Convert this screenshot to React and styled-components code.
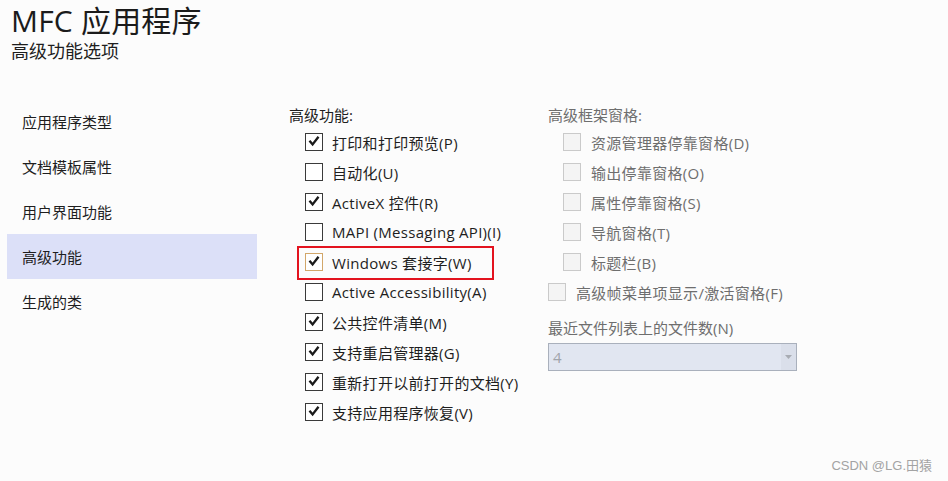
import React from "react";
import styled, { createGlobalStyle } from "styled-components";

const Global = createGlobalStyle`
  html, body { margin: 0; padding: 0; background: #fcfcfc; }
  body {
    font-family: "Open Sans", "Noto Sans CJK SC", sans-serif;
    color: #1e1e1e;
    width: 948px; height: 481px; overflow: hidden;
  }
`;

const Page = styled.div`
  position: relative;
  width: 948px;
  height: 481px;
  display: flex;
  flex-direction: column;
`;

const Header = styled.header`
  padding: 2px 0 0 11px;
  height: 99px;
  box-sizing: border-box;
`;

const Title = styled.h1`
  margin: 0;
  font-size: 30px;
  font-weight: 400;
  line-height: 38px;
  letter-spacing: 0.2px;
  color: #1b1b1b;
`;

const Subtitle = styled.div`
  font-size: 18px;
  line-height: 24px;
  margin-top: -1px;
  color: #1e1e1e;
`;

const Main = styled.div`
  display: flex;
  padding-left: 7px;
`;

const Sidebar = styled.nav`
  width: 250px;
  margin-right: 32px;
  display: flex;
  flex-direction: column;
`;

const NavItem = styled.div`
  height: 45px;
  display: flex;
  align-items: center;
  padding-left: 15px;
  font-size: 15px;
  background: ${(p) => (p.$active ? "#dce0f8" : "transparent")};
`;

const Column = styled.section`
  width: ${(p) => p.$w}px;
  padding-top: 5px;
  display: flex;
  flex-direction: column;
`;

const Label = styled.div`
  font-size: 15px;
  line-height: 23px;
  height: 23px;
  color: ${(p) => (p.$muted ? "#6e6e6e" : "#1e1e1e")};
`;

const Row = styled.label`
  position: relative;
  height: 30px;
  display: flex;
  align-items: center;
  padding-left: ${(p) => p.$indent}px;
  gap: ${(p) => p.$gap || 9}px;
  font-size: 15px;
  letter-spacing: 0.3px;
  white-space: nowrap;
  color: ${(p) => (p.$disabled ? "#6e6e6e" : "#1e1e1e")};
`;

const Box = styled.span`
  width: 18px;
  height: 18px;
  box-sizing: border-box;
  flex: none;
  border: 1px solid ${(p) => (p.$disabled ? "#cacaca" : p.$focus ? "#d2a76a" : "#3a3a3a")};
  background: ${(p) => (p.$disabled ? "#f4f4f4" : "#ffffff")};
  display: flex;
  align-items: center;
  justify-content: center;
`;

const Highlight = styled.span`
  position: absolute;
  left: 8px;
  top: -1px;
  width: 197px;
  height: 34px;
  box-sizing: border-box;
  border: 2px solid #e3131f;
  pointer-events: none;
`;

const FieldLabel = styled(Label)`
  margin-top: 10px;
  margin-bottom: 3px;
`;

const Select = styled.div`
  width: 249px;
  height: 28px;
  box-sizing: border-box;
  border: 1px solid #a9b0bc;
  background: #e1e6f1;
  display: flex;
  align-items: stretch;
`;

const SelectValue = styled.div`
  flex: 1;
  display: flex;
  align-items: center;
  padding-left: 4px;
  font-size: 15px;
  color: #a0a4ab;
`;

const SelectArrow = styled.div`
  width: 15px;
  background: #dadfea;
  display: flex;
  align-items: center;
  justify-content: center;
`;

const Watermark = styled.div`
  position: absolute;
  right: 16px;
  bottom: 7px;
  font-family: "Liberation Sans", "Noto Sans CJK SC", sans-serif;
  font-size: 13px;
  color: #a3a3a3;
`;

const Check = () => (
  <svg width="16" height="16" viewBox="0 0 16 16">
    <polyline
      points="4.2,7.6 6.6,10.4 11.8,3.6"
      fill="none"
      stroke="#1a1a1a"
      strokeWidth="2.3"
      strokeLinecap="square"
    />
  </svg>
);

const Checkbox = ({ checked, disabled, focus }) => (
  <Box $disabled={disabled} $focus={focus}>{checked && <Check />}</Box>
);

const navItems = ["应用程序类型", "文档模板属性", "用户界面功能", "高级功能", "生成的类"];

const features = [
  { t: "打印和打印预览(P)", c: true },
  { t: "自动化(U)", c: false },
  { t: "ActiveX 控件(R)", c: true },
  { t: "MAPI (Messaging API)(I)", c: false },
  { t: "Windows 套接字(W)", c: true, hl: true },
  { t: "Active Accessibility(A)", c: false },
  { t: "公共控件清单(M)", c: true },
  { t: "支持重启管理器(G)", c: true },
  { t: "重新打开以前打开的文档(Y)", c: true },
  { t: "支持应用程序恢复(V)", c: true },
];

const panes = ["资源管理器停靠窗格(D)", "输出停靠窗格(O)", "属性停靠窗格(S)", "导航窗格(T)", "标题栏(B)"];

export default function App() {
  return (
    <Page>
      <Global />
      <Header>
        <Title>MFC 应用程序</Title>
        <Subtitle>高级功能选项</Subtitle>
      </Header>
      <Main>
        <Sidebar>
          {navItems.map((n) => (
            <NavItem key={n} $active={n === "高级功能"}>{n}</NavItem>
          ))}
        </Sidebar>
        <Column $w={259}>
          <Label>高级功能:</Label>
          {features.map((f) => (
            <Row key={f.t} $indent={16}>
              <Checkbox checked={f.c} focus={f.hl} />
              <span>{f.t}</span>
              {f.hl && <Highlight />}
            </Row>
          ))}
        </Column>
        <Column $w={260}>
          <Label $muted>高级框架窗格:</Label>
          {panes.map((p) => (
            <Row key={p} $indent={15} $gap={10} $disabled>
              <Checkbox disabled />
              <span>{p}</span>
            </Row>
          ))}
          <Row $indent={0} $gap={10} $disabled>
            <Checkbox disabled />
            <span>高级帧菜单项显示/激活窗格(F)</span>
          </Row>
          <FieldLabel $muted>最近文件列表上的文件数(N)</FieldLabel>
          <Select>
            <SelectValue>4</SelectValue>
            <SelectArrow>
              <svg width="7" height="4" viewBox="0 0 7 4">
                <polygon points="0,0 7,0 3.5,4" fill="#a8acb3" />
              </svg>
            </SelectArrow>
          </Select>
        </Column>
      </Main>
      <Watermark>CSDN @LG.田猿</Watermark>
    </Page>
  );
}
